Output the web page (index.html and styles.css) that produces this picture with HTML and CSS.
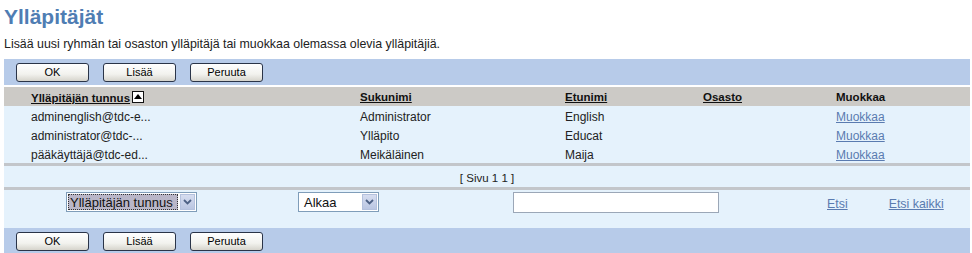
FILE: index.html
```html
<!DOCTYPE html>
<html lang="fi">
<head>
  <meta charset="UTF-8">
  <title>Ylläpitäjät</title>
  <link rel="stylesheet" href="styles.css">
</head>
<body>
  <h1 class="title">Ylläpitäjät</h1>
  <p class="intro">Lisää uusi ryhmän tai osaston ylläpitäjä tai muokkaa olemassa olevia ylläpitäjiä.</p>

  <div class="toolbar">
    <button class="btn">OK</button>
    <button class="btn">Lisää</button>
    <button class="btn">Peruuta</button>
  </div>

  <table class="grid">
    <colgroup>
      <col class="c-pad">
      <col class="c-id">
      <col class="c-last">
      <col class="c-first">
      <col class="c-dept">
      <col>
    </colgroup>
    <thead>
      <tr>
        <th></th>
        <th><a href="#" class="sort">Ylläpitäjän tunnus</a><span class="sort-icon"></span></th>
        <th><a href="#" class="sort">Sukunimi</a></th>
        <th><a href="#" class="sort">Etunimi</a></th>
        <th><a href="#" class="sort">Osasto</a></th>
        <th>Muokkaa</th>
      </tr>
    </thead>
    <tbody>
      <tr>
        <td></td>
        <td>adminenglish@tdc-e...</td>
        <td>Administrator</td>
        <td>English</td>
        <td></td>
        <td><a href="#">Muokkaa</a></td>
      </tr>
      <tr>
        <td></td>
        <td>administrator@tdc-...</td>
        <td>Ylläpito</td>
        <td>Educat</td>
        <td></td>
        <td><a href="#">Muokkaa</a></td>
      </tr>
      <tr>
        <td></td>
        <td>pääkäyttäjä@tdc-ed...</td>
        <td>Meikäläinen</td>
        <td>Maija</td>
        <td></td>
        <td><a href="#">Muokkaa</a></td>
      </tr>
    </tbody>
  </table>

  <div class="pager">[ Sivu 1 1 ]</div>

  <div class="search">
    <div class="sel sel-field">
      <span class="sel-text">Ylläpitäjän tunnus</span>
      <span class="sel-btn"><svg width="9" height="6" viewBox="0 0 9 6"><path d="M1 1 L4.5 4.5 L8 1" fill="none" stroke="#4d6185" stroke-width="1.8"/></svg></span>
    </div>
    <div class="sel sel-mode">
      <span class="sel-text">Alkaa</span>
      <span class="sel-btn"><svg width="9" height="6" viewBox="0 0 9 6"><path d="M1 1 L4.5 4.5 L8 1" fill="none" stroke="#4d6185" stroke-width="1.8"/></svg></span>
    </div>
    <input class="query" type="text">
    <a href="#" class="find">Etsi</a>
    <a href="#" class="find-all">Etsi kaikki</a>
  </div>

  <div class="toolbar toolbar-bottom">
    <button class="btn">OK</button>
    <button class="btn">Lisää</button>
    <button class="btn">Peruuta</button>
  </div>
</body>
</html>
```

FILE: styles.css
```css
/* Yleiset */
body {
  margin: 0;
  padding: 0 2px 0 4px;
  font-family: "Liberation Sans", Arial, sans-serif;
  font-size: 12px;
  color: #222;
  background: #fff;
}

.title {
  margin: 4px 0 0 0;
  font-size: 21px;
  line-height: 26px;
  font-weight: bold;
  color: #4f7db3;
}

.intro {
  margin: 7px 0 0 0;
  font-size: 12.4px;
  line-height: 14px;
  color: #222;
}

/* Painikepalkki */
.toolbar {
  margin-top: 8px;
  height: 26px;
  background: #b7cbe9;
  display: flex;
  align-items: center;
  gap: 14px;
  padding-left: 12px;
}

.toolbar-bottom {
  margin-top: 0;
}

.btn {
  width: 73px;
  height: 19px;
  padding: 0;
  border: 1px solid #2a3448;
  border-radius: 3px;
  background: linear-gradient(to bottom, #ffffff, #f2f2ee 60%, #d6d4cc);
  font-family: "Liberation Sans", Arial, sans-serif;
  font-size: 11px;
  color: #000;
}

/* Taulukko */
.grid {
  width: 100%;
  margin-top: 2px;
  border-collapse: collapse;
  table-layout: fixed;
  background: #e5f2fc;
}

.c-pad { width: 27px; }
.c-id { width: 329px; }
.c-last { width: 205px; }
.c-first { width: 138px; }
.c-dept { width: 133px; }

.grid th {
  height: 18px;
  padding: 1px 0 0 0;
  text-align: left;
  vertical-align: middle;
  font-size: 11.5px;
  font-weight: bold;
  background: #cccac6;
  color: #111;
}

.grid td {
  height: 15px;
  padding: 4px 0 0 0;
  line-height: 14px;
  vertical-align: top;
  color: #222;
}

.grid tbody tr:last-child td {
  border-bottom: 3px solid #c3c6ca;
}

.sort {
  color: #111;
  text-decoration: underline;
}

.sort-icon {
  display: inline-block;
  width: 10px;
  height: 10px;
  margin-left: 2px;
  vertical-align: -1px;
  border: 1px solid #111;
  background: #fff;
  position: relative;
}

.sort-icon::after {
  content: "";
  position: absolute;
  left: 1px;
  top: 2px;
  border-left: 4px solid transparent;
  border-right: 4px solid transparent;
  border-bottom: 5px solid #000;
}

.grid td a,
.search a {
  color: #5a7bb0;
  text-decoration: underline;
}

/* Sivutus */
.pager {
  height: 21px;
  line-height: 24px;
  text-align: center;
  font-size: 11.5px;
  background: #e5f2fc;
  border-bottom: 3px solid #c3c6ca;
}

/* Haku */
.search {
  height: 36px;
  padding-top: 2px;
  background: #e5f2fc;
  display: flex;
  align-items: flex-start;
  font-size: 12.4px;
}

.sel {
  display: flex;
  height: 20px;
  border: 1px solid #7f9db9;
  background: #fff;
  box-sizing: border-box;
}

.sel-text {
  flex: 1;
  display: flex;
  align-items: center;
  padding-left: 3px;
  font-size: 13px;
  color: #111;
}

.sel-btn {
  width: 15px;
  margin: 1px;
  display: flex;
  align-items: center;
  justify-content: center;
  background: linear-gradient(to bottom, #d6ddf0, #bac6e2);
  border: 1px solid #b4c1dd;
  box-sizing: border-box;
}

.sel-field {
  width: 131px;
  margin-left: 62px;
}

.sel-field .sel-text {
  margin: 1px;
  padding-left: 2px;
  background: #b9b6c8;
  outline: 1px dotted #333;
  outline-offset: -1px;
}

.sel-mode {
  width: 81px;
  margin-left: 101px;
}

.sel-mode .sel-text {
  padding-left: 5px;
}

.query {
  width: 206px;
  height: 21px;
  margin-left: 134px;
  padding: 0;
  border: 1px solid #9ba7b7;
  box-sizing: border-box;
  background: #fff;
}

.find {
  margin-left: 108px;
  line-height: 24px;
}

.find-all {
  margin-left: 41px;
  line-height: 24px;
}
```
